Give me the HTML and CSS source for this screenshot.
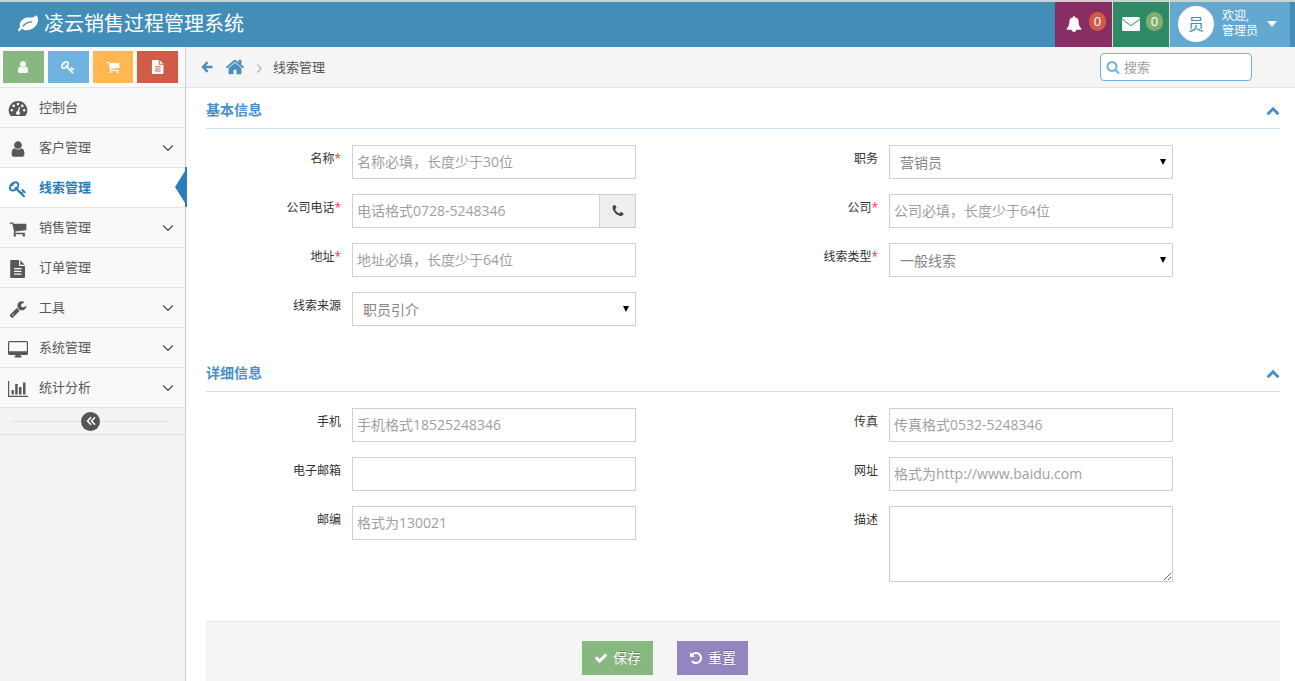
FILE: index.html
```html
<!DOCTYPE html>
<html lang="zh-CN">
<head>
<meta charset="utf-8">
<title>凌云销售过程管理系统</title>
<link rel="stylesheet" href="styles.css">
</head>
<body>
<svg class="sprite" aria-hidden="true">
  <symbol id="i-user" viewBox="0 0 1792 1792"><path d="M1536 1399q0 109-62.5 187t-150.5 78h-854q-88 0-150.5-78t-62.5-187q0-85 8.5-160.5t31.5-152 58.5-131 94-89 134.5-34.5q131 128 313 128t313-128q76 0 134.5 34.5t94 89 58.5 131 31.5 152 8.5 160.5zm-256-887q0 159-112.5 271.5t-271.5 112.5-271.5-112.5-112.5-271.5 112.5-271.5 271.5-112.5 271.5 112.5 112.5 271.5z"/></symbol>
  <symbol id="i-key" viewBox="0 0 1792 1792"><path d="M832 512q0-80-56-136t-136-56-136 56-56 136q0 42 19 83-41-19-83-19-80 0-136 56t-56 136 56 136 136 56 136-56 56-136q0-42-19-83 41 19 83 19 80 0 136-56t56-136zm851 704q0 17-49 66t-66 49q-9 0-28.5-16t-36.5-33-38.5-40-24.5-26l-96 96 220 220q28 28 28 68 0 42-39 81t-81 39q-40 0-68-28l-671-671q-176 131-365 131-163 0-265.5-102.5t-102.5-265.5q0-160 95-313t248-248 313-95q163 0 265.5 102.5t102.5 265.5q0 189-131 365l355 355 96-96q-3-3-26-24.5t-40-38.5-33-36.5-16-28.5q0-17 49-66t66-49q13 0 23 10 6 6 46 44.5t82 79.5 86.5 86 73 78 28.5 41z"/></symbol>
  <symbol id="i-cart" viewBox="0 0 1792 1792"><path d="M704 1536q0 52-38 90t-90 38-90-38-38-90 38-90 90-38 90 38 38 90zm896 0q0 52-38 90t-90 38-90-38-38-90 38-90 90-38 90 38 38 90zm128-1088v512q0 24-16.5 42.5t-40.5 21.5l-1044 122q13 60 13 70 0 16-24 64h920q26 0 45 19t19 45-19 45-45 19h-1024q-26 0-45-19t-19-45q0-11 8-31.5t16-36 21.5-40 15.5-29.5l-177-823h-204q-26 0-45-19t-19-45 19-45 45-19h256q16 0 28.5 6.5t19.5 15.5 13 24.5 8 26 5.5 29.5 4.5 26h1201q26 0 45 19t19 45z"/></symbol>
  <symbol id="i-file" viewBox="0 0 18 18"><path fill-rule="evenodd" d="M2.200 0H10v6h6v11a1 1 0 0 1-1 1H2.200a1 1 0 0 1-1-1V1a1 1 0 0 1 1-1zM11.200 0.300L15.700 4.800H11.200zM5 8v1.300h7.500V8zM5 10.800v1.300h7.500v-1.300zM5 13.500v1.300h7.500v-1.300z"/></symbol>
  <symbol id="i-leaf" viewBox="0 0 1792 1792"><path d="M1280 704q0-26-19-45t-45-19q-172 0-318 49.500t-259.500 134-235.500 219.500q-19 21-19 45 0 26 19 45t45 19q24 0 45-19 27-24 74-71t67-66q137-124 268.500-176t313.500-52q26 0 45-19t19-45zm512-198q0 95-20 193-46 224-184.500 383t-357.500 268q-214 108-438 108-148 0-286-47-15-5-88-42t-96-37q-16 0-39.500 32t-45 70-52.500 70-60 32q-43 0-63.500-17.500t-45.500-59.500q-2-4-6-11t-5.500-10-3-9.500-1.500-13.500q0-35 31-73.500t68-65.500 68-56 31-48q0-4-14-38t-16-44q-9-51-9-104 0-115 43.500-220t119-184.500 170.500-139 204-95.500q55-18 145-25.500t179.500-9 178.500-6 163.500-24 113.500-56.500l29.500-29.500 29.500-28 27-20 36.500-16 43.500-4.500q39 0 70.500 46t47.500 112 24 124 8 96z"/></symbol>
  <symbol id="i-bell" viewBox="0 0 1792 1792"><path d="M1728 1408q0 52-38 90t-90 38h-448q0 106-75 181t-181 75-181-75-75-181h-448q-52 0-90-38t-38-90q50-42 91-88t85-119.500 74.500-158.500 50-206 19.500-260q0-152 117-282.500t307-158.500q-8-19-8-39 0-40 28-68t68-28 68 28 28 68q0 20-8 39 190 28 307 158.500t117 282.500q0 139 19.500 260t50 206 74.500 158.500 85 119.500 91 88z"/></symbol>
  <symbol id="i-mail" viewBox="0 0 18 18"><path d="M1.500 2h15A1.500 1.500 0 0 1 18 3.500L9 10.200 0 3.500A1.500 1.500 0 0 1 1.500 2zM0 4.600l9 6.700L18 4.600v9.900a1.500 1.500 0 0 1-1.500 1.500h-15A1.500 1.500 0 0 1 0 14.500z"/></symbol>
  <symbol id="i-home" viewBox="0 0 1792 1792"><path d="M1472 992v480q0 26-19 45t-45 19h-384v-384h-256v384h-384q-26 0-45-19t-19-45v-480q0-1 .5-3t.5-3l575-474 575 474q1 2 1 6zm223-69l-62 74q-8 9-21 11h-3q-13 0-21-7l-692-577-692 577q-12 8-24 7-13-2-21-11l-62-74q-8-10-7-23.500t11-21.500l719-599q32-26 76-26t76 26l244 204v-195q0-14 9-23t23-9h192q14 0 23 9t9 23v408l219 182q10 8 11 21.500t-7 23.500z"/></symbol>
  <symbol id="i-search" viewBox="0 0 1792 1792"><path d="M1216 832q0-185-131.500-316.500t-316.500-131.500-316.500 131.500-131.500 316.500 131.500 316.500 316.500 131.500 316.500-131.500 131.500-316.500zm512 832q0 52-38 90t-90 38q-54 0-90-38l-343-342q-179 124-399 124-143 0-273.500-55.500t-225-150-150-225-55.500-273.500 55.500-273.500 150-225 225-150 273.500-55.500 273.500 55.500 225 150 150 225 55.500 273.500q0 220-124 399l343 343q37 37 37 90z"/></symbol>
  <symbol id="i-gauge" viewBox="0 0 20 18"><path fill-rule="evenodd" d="M10 1a9.200 9.200 0 0 1 7.800 14.200q-.4.800-1.200.8H3.400q-.8 0-1.200-.8A9.200 9.200 0 0 1 10 1zM3.800 9a1.300 1.300 0 1 0 0 2.600 1.300 1.300 0 0 0 0-2.600zM5.700 4.600a1.300 1.300 0 1 0 0 2.600 1.300 1.300 0 0 0 0-2.600zM10 2.700a1.300 1.300 0 1 0 0 2.600 1.300 1.300 0 0 0 0-2.600zM14.300 4.600a1.300 1.300 0 1 0 0 2.600 1.300 1.300 0 0 0 0-2.600zM16.200 9a1.300 1.300 0 1 0 0 2.600 1.300 1.300 0 0 0 0-2.600zM10.900 6.900L9.800 11a2 2 0 1 0 1.300.3l1-4.100z"/></symbol>
  <symbol id="i-wrench" viewBox="0 0 1792 1792"><path d="M448 1472q0-26-19-45t-45-19-45 19-19 45 19 45 45 19 45-19 19-45zm644-420l-682 682q-37 37-90 37-52 0-91-37l-106-108q-38-36-38-90 0-53 38-91l681-681q39 98 114.500 173.500t173.500 114.500zm634-435q0 39-23 106-47 134-164.500 217.500t-258.500 83.500q-185 0-316.500-131.500t-131.500-316.500 131.500-316.500 316.500-131.500q58 0 121.500 16.500t107.500 46.500q16 11 16 28t-16 28l-293 169v224l193 107q5-3 79-48.500t135.500-81 70.500-35.500q15 0 23.500 10t8.500 25z"/></symbol>
  <symbol id="i-desktop" viewBox="0 0 20 18"><path fill-rule="evenodd" d="M1.500 1h17A1.500 1.500 0 0 1 20 2.500v11a1.500 1.500 0 0 1-1.500 1.500H12.500v1h1V17.500h-7V16h1v-1h-6A1.500 1.500 0 0 1 0 13.500V2.500A1.500 1.500 0 0 1 1.500 1zM1.200 2.200v9h17.600v-9z"/></symbol>
  <symbol id="i-chart" viewBox="0 0 20 18"><path d="M0 1h1.200v14.800H20V17H0zM3.500 10h2.300v4.500H3.500zM7.200 4h2.500v10.500H7.200zM11 7h2.500v7.500H11zM15 2.500h2.500v12H15z"/></symbol>
  <symbol id="i-phone" viewBox="0 0 1792 1792"><path d="M1600 1240q0 27-10 70.500t-21 68.500q-21 50-122 106-94 51-186 51-27 0-53-3.500t-57.500-12.500-47-14.500-55.500-20.500-49-18q-98-35-175-83-127-79-264-216t-216-264q-48-77-83-175-3-9-18-49t-20.500-55.500-14.500-47-12.500-57.500-3.500-53q0-92 51-186 56-101 106-122 25-11 68.500-21t70.500-10q14 0 21 3 18 6 53 76 11 19 30 54t35 63.500 31 53.500q3 4 17.500 25t21.500 35.500 7 28.500q0 20-28.500 50t-62 55-62 53-28.500 46q0 9 5 22.500t8.500 20.500 14 24 11.500 19q76 137 174 235t235 174q2 1 19 11.500t24 14 20.500 8.500 22.500 5q18 0 46-28.500t53-62 55-62 50-28.500q14 0 28.500 7t35.500 21.500 25 17.500q25 15 53.500 31t63.500 35 54 30q70 35 76 53 3 7 3 21z"/></symbol>
  <symbol id="i-check" viewBox="0 0 1792 1792"><path d="M1671 566q0 40-28 68l-724 724-136 136q-28 28-68 28t-68-28l-136-136-362-362q-28-28-28-68t28-68l136-136q28-28 68-28t68 28l294 295 656-657q28-28 68-28t68 28l136 136q28 28 28 68z"/></symbol>
  <symbol id="i-undo" viewBox="0 0 1792 1792"><path d="M1664 896q0 156-61 298t-164 245-245 164-298 61q-172 0-327-72.500t-264-204.500q-7-10-6.500-22.500t8.500-20.500l137-138q10-9 25-9 16 2 23 12 73 95 179 147t225 52q104 0 198.500-40.500t163.500-109.500 109.500-163.500 40.500-198.500-40.500-198.500-109.500-163.500-163.500-109.500-198.500-40.500q-98 0-188 35.500t-160 101.500l137 138q31 30 14 69-17 40-59 40h-448q-26 0-45-19t-19-45v-448q0-42 40-59 39-17 69 14l130 129q107-101 244.500-156.500t284.500-55.500q156 0 298 61t245 164 164 245 61 298z"/></symbol>
  <symbol id="i-back" viewBox="0 0 12 12"><path fill="none" stroke="currentColor" stroke-width="2.400" d="M6.600 1.200L2 6l4.600 4.800M2.200 6H11.500"/></symbol>
  <symbol id="i-up" viewBox="0 0 14 14"><path fill="none" stroke="currentColor" stroke-width="3" d="M1.600 11.200L7 5.800l5.400 5.400"/></symbol>
  <symbol id="i-down" viewBox="0 0 12 12"><path fill="none" stroke="currentColor" stroke-width="1.400" d="M1.200 2.500L6 7.200l4.800-4.700"/></symbol>
  <symbol id="i-sep" viewBox="0 0 12 12"><path fill="none" stroke="currentColor" stroke-width="1.300" d="M4.300 2.500L8 6.500l-3.700 4"/></symbol>
  <symbol id="i-dbl" viewBox="0 0 12 12"><path fill="none" stroke="currentColor" stroke-width="1.500" d="M6 2.200L2.500 6 6 9.800M10 2.200L6.500 6 10 9.800"/></symbol>
</svg>

<header class="navbar">
  <a class="brand" href="#"><svg class="icon icon-20"><use href="#i-leaf"/></svg>凌云销售过程管理系统</a>
  <nav class="user-nav">
    <a class="tile tile-purple" href="#"><svg class="icon icon-16"><use href="#i-bell"/></svg><span class="badge badge-red">0</span></a>
    <a class="tile tile-green" href="#"><svg class="icon icon-18"><use href="#i-mail"/></svg><span class="badge badge-green">0</span></a>
    <a class="tile tile-blue" href="#"><span class="avatar">员</span><span class="welcome">欢迎,<br>管理员</span><span class="caret"></span></a>
  </nav>
</header>

<div class="layout">
  <aside class="sidebar">
    <div class="shortcuts">
      <button class="shortcut green" type="button" aria-label="客户"><svg class="icon icon-14"><use href="#i-user"/></svg></button>
      <button class="shortcut blue" type="button" aria-label="线索"><svg class="icon icon-14"><use href="#i-key"/></svg></button>
      <button class="shortcut orange" type="button" aria-label="销售"><svg class="icon icon-14"><use href="#i-cart"/></svg></button>
      <button class="shortcut red" type="button" aria-label="订单"><svg class="icon icon-14"><use href="#i-file"/></svg></button>
    </div>
    <ul class="menu">
      <li><a class="item" href="#"><svg class="icon icon-menu"><use href="#i-gauge"/></svg><span class="name">控制台</span></a></li>
      <li><a class="item" href="#"><svg class="icon icon-menu"><use href="#i-user"/></svg><span class="name">客户管理</span><svg class="icon icon-12"><use href="#i-down"/></svg></a></li>
      <li><a class="item active" href="#"><svg class="icon icon-menu"><use href="#i-key"/></svg><span class="name">线索管理</span></a></li>
      <li><a class="item" href="#"><svg class="icon icon-menu"><use href="#i-cart"/></svg><span class="name">销售管理</span><svg class="icon icon-12"><use href="#i-down"/></svg></a></li>
      <li><a class="item" href="#"><svg class="icon icon-menu"><use href="#i-file"/></svg><span class="name">订单管理</span></a></li>
      <li><a class="item" href="#"><svg class="icon icon-menu"><use href="#i-wrench"/></svg><span class="name">工具</span><svg class="icon icon-12"><use href="#i-down"/></svg></a></li>
      <li><a class="item" href="#"><svg class="icon icon-menu"><use href="#i-desktop"/></svg><span class="name">系统管理</span><svg class="icon icon-12"><use href="#i-down"/></svg></a></li>
      <li><a class="item" href="#"><svg class="icon icon-menu"><use href="#i-chart"/></svg><span class="name">统计分析</span><svg class="icon icon-12"><use href="#i-down"/></svg></a></li>
    </ul>
    <div class="collapse"><button class="toggle" type="button" aria-label="收起菜单"><svg class="icon icon-12"><use href="#i-dbl"/></svg></button></div>
  </aside>

  <main class="main">
    <div class="crumbs">
      <a class="crumb" href="#" aria-label="返回"><svg class="icon icon-12"><use href="#i-back"/></svg></a>
      <a class="crumb crumb-home" href="#" aria-label="首页"><svg class="icon icon-20"><use href="#i-home"/></svg></a>
      <svg class="icon icon-12 crumb-sep"><use href="#i-sep"/></svg>
      <span class="crumb-text">线索管理</span>
      <label class="search"><svg class="icon icon-14"><use href="#i-search"/></svg><input class="search-input" type="text" placeholder="搜索" aria-label="搜索"></label>
    </div>

    <form class="form">
      <section class="section">
        <h2 class="section-title">基本信息<svg class="icon icon-14"><use href="#i-up"/></svg></h2>
        <div class="fields">
          <div class="field"><label class="label" for="name">名称<span class="req">*</span></label><input class="control" id="name" type="text" placeholder="名称必填，长度少于30位"></div>
          <div class="field"><label class="label" for="post">职务</label><div class="select-wrap"><select class="control select" id="post"><option>营销员</option></select></div></div>
          <div class="field"><label class="label" for="tel">公司电话<span class="req">*</span></label><div class="group"><input class="control" id="tel" type="text" placeholder="电话格式0728-5248346"><span class="addon"><svg class="icon icon-14"><use href="#i-phone"/></svg></span></div></div>
          <div class="field"><label class="label" for="company">公司<span class="req">*</span></label><input class="control" id="company" type="text" placeholder="公司必填，长度少于64位"></div>
          <div class="field"><label class="label" for="address">地址<span class="req">*</span></label><input class="control" id="address" type="text" placeholder="地址必填，长度少于64位"></div>
          <div class="field"><label class="label" for="type">线索类型<span class="req">*</span></label><div class="select-wrap"><select class="control select" id="type"><option>一般线索</option></select></div></div>
          <div class="field"><label class="label" for="source">线索来源</label><div class="select-wrap"><select class="control select" id="source"><option>职员引介</option></select></div></div>
        </div>
      </section>

      <section class="section">
        <h2 class="section-title">详细信息<svg class="icon icon-14"><use href="#i-up"/></svg></h2>
        <div class="fields">
          <div class="field"><label class="label" for="mobile">手机</label><input class="control" id="mobile" type="text" placeholder="手机格式18525248346"></div>
          <div class="field"><label class="label" for="fax">传真</label><input class="control" id="fax" type="text" placeholder="传真格式0532-5248346"></div>
          <div class="field"><label class="label" for="email">电子邮箱</label><input class="control" id="email" type="text"></div>
          <div class="field"><label class="label" for="url">网址</label><input class="control" id="url" type="text" placeholder="格式为http://www.baidu.com"></div>
          <div class="field"><label class="label" for="zip">邮编</label><input class="control" id="zip" type="text" placeholder="格式为130021"></div>
          <div class="field"><label class="label" for="desc">描述</label><textarea class="control area" id="desc"></textarea></div>
        </div>
      </section>

      <div class="actions">
        <button class="btn btn-save" type="button"><svg class="icon icon-14"><use href="#i-check"/></svg>保存</button>
        <button class="btn btn-reset" type="reset"><svg class="icon icon-14"><use href="#i-undo"/></svg>重置</button>
      </div>
    </form>
  </main>
</div>
</body>
</html>
```
FILE: styles.css
```css
* { box-sizing: border-box; }

body {
  margin: 0;
  min-height: 100vh;
  display: flex;
  flex-direction: column;
  background: #fff;
  color: #393939;
  font: 13px/20px "Open Sans", "Noto Sans CJK SC", sans-serif;
}

a { color: inherit; text-decoration: none; }
button, input, select, textarea { font: inherit; border-radius: 0; margin: 0; }
button { border: 0; padding: 0; cursor: pointer; }

.sprite { position: absolute; width: 0; height: 0; }
.icon { flex: none; fill: currentColor; display: block; }
.icon-12 { width: 12px; height: 12px; }
.icon-14 { width: 14px; height: 14px; }
.icon-16 { width: 16px; height: 16px; }
.icon-18 { width: 18px; height: 18px; }
.icon-20 { width: 20px; height: 20px; }
.icon-menu { width: 20px; height: 18px; }

/* Top bar */
.navbar {
  display: flex;
  justify-content: space-between;
  height: 47px;
  padding: 0 5px 0 18px;
  border-top: 2px solid #d0d0d0;
  background: #438eb9;
  color: #fff;
}
.brand { display: flex; align-items: center; gap: 6px; padding-bottom: 2px; font-size: 20px; line-height: 24px; }
.user-nav { display: flex; gap: 1px; background: #ddd; }
.tile { display: flex; align-items: center; padding: 0 6px 2px 8px; }
.tile-purple { width: 57px; padding-left: 11px; justify-content: space-between; background: #892e65; }
.tile-green { width: 56px; padding-left: 9px; justify-content: space-between; background: #2e8965; }
.tile-blue { width: 120px; background: #62a8d1; }
.badge {
  width: 17px;
  height: 19px;
  margin-bottom: 4px;
  border-radius: 9px;
  font-size: 13px;
  line-height: 18px;
  text-align: center;
}
.badge-red { background: #d15b47; }
.badge-green { background: #82af6f; }
.avatar {
  width: 36px;
  height: 36px;
  border-radius: 50%;
  background: #fff;
  color: #478fb8;
  font-size: 16px;
  line-height: 36px;
  text-align: center;
}
.welcome { margin-left: 8px; padding-bottom: 2px; font-size: 12px; line-height: 15px; }
.caret { margin-left: 9px; border: 5px solid transparent; border-top: 6px solid #fff; border-bottom: 0; }

.layout { display: flex; flex: 1; }

/* Sidebar */
.sidebar { width: 186px; flex: none; border-right: 1px solid #ccc; background: #f2f2f2; }
.shortcuts {
  display: grid;
  grid-template-columns: repeat(4, 1fr);
  gap: 4px;
  height: 40px;
  padding: 4px 7px 4px 3px;
  background: #fafafa;
}
.shortcut { display: flex; align-items: center; justify-content: center; color: #fff; }
.green { background: #87b87f; }
.blue { background: #6fb3e0; }
.orange { background: #ffb752; }
.red { background: #d15b47; }
.menu { margin: 0; padding: 0; list-style: none; border-bottom: 1px solid #e5e5e5; }
.item {
  position: relative;
  display: flex;
  align-items: center;
  gap: 11px;
  height: 40px;
  padding: 2px 11px 0 8px;
  border-top: 1px solid #e5e5e5;
  background: #f9f9f9;
  color: #585858;
}
.name { flex: 1; padding-bottom: 4px; }
.active { background: #fff; color: #2b7dbc; font-weight: bold; }
.active::before,
.active::after { content: ""; position: absolute; top: -1px; height: 40px; }
.active::before { right: 0; width: 10px; background: #2b7dbc; clip-path: polygon(100% 10%, 0 50%, 100% 90%); }
.active::after { right: -2px; width: 2px; background: #2b7dbc; }
.collapse {
  position: relative;
  display: flex;
  justify-content: center;
  align-items: center;
  height: 27px;
  padding-right: 4px;
  border-bottom: 1px solid #e0e0e0;
  background: #f3f3f3;
}
.collapse::before { content: ""; position: absolute; left: 11px; right: 15px; top: 13px; border-top: 1px solid #e0e0e0; }
.toggle {
  position: relative;
  display: flex;
  align-items: center;
  justify-content: center;
  width: 19px;
  height: 19px;
  border-radius: 50%;
  background: #555;
  color: #fff;
}

/* Breadcrumbs */
.main { flex: 1; min-width: 0; display: flex; flex-direction: column; }
.crumbs {
  display: flex;
  align-items: center;
  height: 41px;
  padding: 0 43px 0 15px;
  border-bottom: 1px solid #e5e5e5;
  background: #f5f5f5;
  color: #555;
}
.crumb { color: #4c8fbd; }
.crumb-home { margin-left: 12px; }
.crumb-sep { margin: 2px 8px 0; color: #b2b6bf; }
.search {
  display: flex;
  align-items: center;
  gap: 4px;
  width: 152px;
  height: 28px;
  margin-left: auto;
  padding: 0 5px;
  border: 1px solid #6fb3e0;
  border-radius: 4px;
  background: #fff;
  color: #6fb3e0;
}
.search-input { width: 100%; border: 0; padding: 0; outline: 0; background: none; color: #666; }
::placeholder { color: #a0a0a0; opacity: 1; }

/* Form */
.form { flex: 1; display: flex; flex-direction: column; padding: 0 15px 0 20px; }
.section { margin-bottom: 25px; }
.section-title {
  display: flex;
  align-items: center;
  justify-content: space-between;
  height: 41px;
  margin: 0 0 16px;
  padding-top: 4px;
  border-bottom: 1px solid #cce2f1;
  color: #478fca;
  font-size: 14px;
  line-height: 20px;
}
.fields { display: grid; grid-template-columns: 1fr 1fr; row-gap: 15px; }
.field {
  display: grid;
  grid-template-columns: 135fr 284fr 96fr;
  column-gap: 11px;
  align-items: start;
}
.label { padding-top: 4px; color: #333; font-size: 12px; text-align: right; }
.req { color: #f33; }
.control {
  display: block;
  width: 100%;
  height: 34px;
  padding: 4px 4px 6px;
  border: 1px solid #d0d0d0;
  background: #fff;
  color: #858585;
  font-size: 14px;
}
.area { height: 76px; resize: both; }
.select-wrap { position: relative; }
.select { appearance: none; padding: 6px 24px 4px 10px; }
.select-wrap::after {
  content: "";
  position: absolute;
  right: 7px;
  top: 14px;
  border: 3px solid transparent;
  border-top: 6px solid #000;
  border-bottom: 0;
  pointer-events: none;
}
.group { display: flex; }
.addon {
  display: flex;
  align-items: center;
  justify-content: center;
  width: 36px;
  flex: none;
  border: 1px solid #ccc;
  border-left: 0;
  background: #eee;
  color: #444;
}

.actions {
  display: flex;
  flex: 1;
  gap: 24px;
  margin-top: 14px;
  padding: 19px 0 6px 35%;
  border-top: 1px solid #e5e5e5;
  background: #f5f5f5;
}
.btn {
  display: flex;
  align-items: center;
  gap: 5px;
  height: 34px;
  padding: 0 12px;
  color: #fff;
  font-size: 14px;
  text-shadow: 0 -1px 0 rgba(0, 0, 0, 0.25);
}
.btn-save { background: #87b87f; }
.btn-reset { background: #9585bf; }
```
